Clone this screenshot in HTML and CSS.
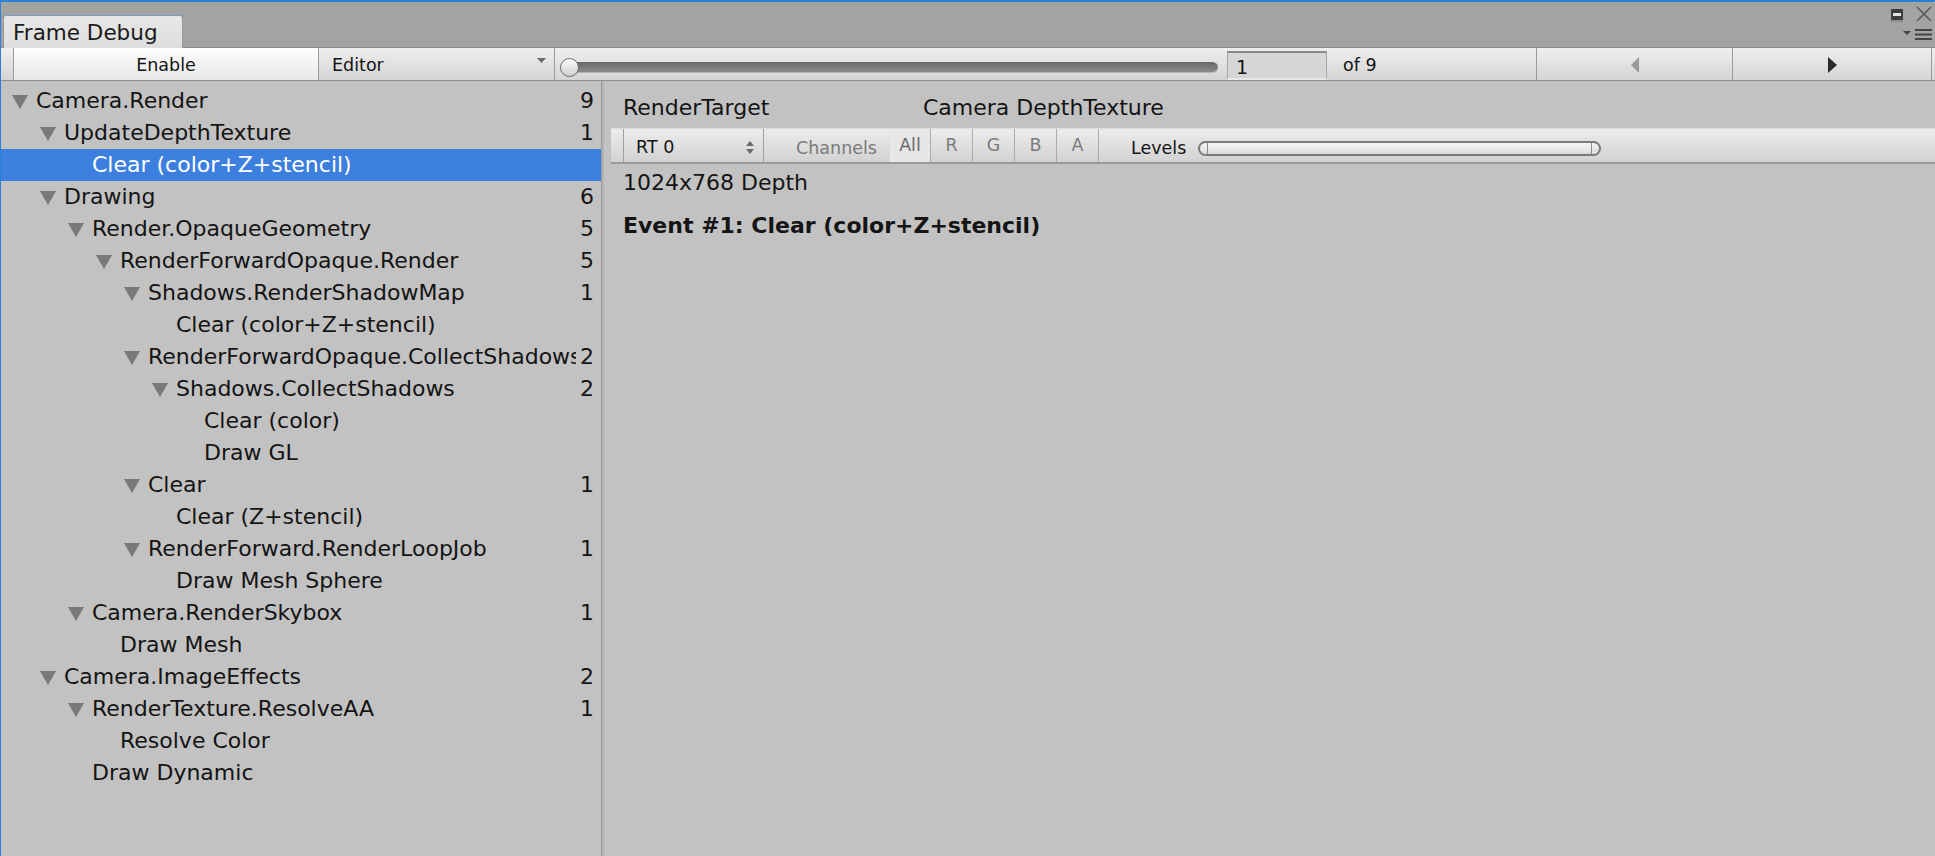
FILE: index.html
```html
<!DOCTYPE html>
<html>
<head>
<meta charset="utf-8">
<title>Frame Debug</title>
<link rel="stylesheet" href="styles.css">
</head>
<body>
<div class="window">
  <div class="titlebar">
    <div class="tab">Frame Debug</div>
    <div class="wincontrols">
      <div class="wc-top">
        <svg class="ic-max" width="12" height="13" viewBox="0 0 12 13"><rect x="0" y="0" width="12" height="12" fill="#3d3d3d"/><rect x="2" y="4" width="8" height="3" fill="#e2e2e2"/><rect x="0" y="11" width="12" height="2" fill="#8c8c8c"/></svg>
        <svg class="ic-close" width="18" height="18" viewBox="0 0 18 18"><path d="M2 2 L16 16 M16 2 L2 16" stroke="#5a5a5a" stroke-width="1.6" fill="none"/></svg>
      </div>
      <svg class="ic-menu" width="30" height="12" viewBox="0 0 30 12"><polygon points="0,2 8,2 4,6" fill="#444"/><path d="M12 1 H29 M12 5.5 H29 M12 10 H29" stroke="#444" stroke-width="2" fill="none"/></svg>
    </div>
  </div>

  <div class="toolbar">
    <div class="tb-lead"></div>
    <div class="tb-enable">Enable</div>
    <div class="tb-editor">
      <span>Editor</span>
      <svg width="9" height="6" viewBox="0 0 9 6"><polygon points="0,0 9,0 4.5,5" fill="#6a6a6a"/></svg>
    </div>
    <div class="tb-slider">
      <div class="thumb"></div>
      <div class="track"></div>
    </div>
    <div class="tb-field">1</div>
    <div class="tb-of">of 9</div>
    <div class="tb-nav">
      <svg width="8" height="16" viewBox="0 0 8 16"><polygon points="8,0 8,16 0,8" fill="#9a9a9a"/></svg>
    </div>
    <div class="tb-nav last">
      <svg width="9" height="16" viewBox="0 0 9 16"><polygon points="0,0 9,8 0,16" fill="#2a2a2a"/></svg>
    </div>
  </div>

  <div class="main">
    <div class="tree">
      <div class="row l0"><span class="twist"><svg width="16" height="14" viewBox="0 0 16 14"><polygon points="0,0 16,0 8,14" fill="#797979"/></svg></span><span class="label">Camera.Render</span><span class="count">9</span></div>
      <div class="row l1"><span class="twist"><svg width="16" height="14" viewBox="0 0 16 14"><polygon points="0,0 16,0 8,14" fill="#797979"/></svg></span><span class="label">UpdateDepthTexture</span><span class="count">1</span></div>
      <div class="row l2 selected"><span class="twist"></span><span class="label">Clear (color+Z+stencil)</span><span class="count"></span></div>
      <div class="row l1"><span class="twist"><svg width="16" height="14" viewBox="0 0 16 14"><polygon points="0,0 16,0 8,14" fill="#797979"/></svg></span><span class="label">Drawing</span><span class="count">6</span></div>
      <div class="row l2"><span class="twist"><svg width="16" height="14" viewBox="0 0 16 14"><polygon points="0,0 16,0 8,14" fill="#797979"/></svg></span><span class="label">Render.OpaqueGeometry</span><span class="count">5</span></div>
      <div class="row l3"><span class="twist"><svg width="16" height="14" viewBox="0 0 16 14"><polygon points="0,0 16,0 8,14" fill="#797979"/></svg></span><span class="label">RenderForwardOpaque.Render</span><span class="count">5</span></div>
      <div class="row l4"><span class="twist"><svg width="16" height="14" viewBox="0 0 16 14"><polygon points="0,0 16,0 8,14" fill="#797979"/></svg></span><span class="label">Shadows.RenderShadowMap</span><span class="count">1</span></div>
      <div class="row l5"><span class="twist"></span><span class="label">Clear (color+Z+stencil)</span><span class="count"></span></div>
      <div class="row l4"><span class="twist"><svg width="16" height="14" viewBox="0 0 16 14"><polygon points="0,0 16,0 8,14" fill="#797979"/></svg></span><span class="label">RenderForwardOpaque.CollectShadows</span><span class="count">2</span></div>
      <div class="row l5"><span class="twist"><svg width="16" height="14" viewBox="0 0 16 14"><polygon points="0,0 16,0 8,14" fill="#797979"/></svg></span><span class="label">Shadows.CollectShadows</span><span class="count">2</span></div>
      <div class="row l6"><span class="twist"></span><span class="label">Clear (color)</span><span class="count"></span></div>
      <div class="row l6"><span class="twist"></span><span class="label">Draw GL</span><span class="count"></span></div>
      <div class="row l4"><span class="twist"><svg width="16" height="14" viewBox="0 0 16 14"><polygon points="0,0 16,0 8,14" fill="#797979"/></svg></span><span class="label">Clear</span><span class="count">1</span></div>
      <div class="row l5"><span class="twist"></span><span class="label">Clear (Z+stencil)</span><span class="count"></span></div>
      <div class="row l4"><span class="twist"><svg width="16" height="14" viewBox="0 0 16 14"><polygon points="0,0 16,0 8,14" fill="#797979"/></svg></span><span class="label">RenderForward.RenderLoopJob</span><span class="count">1</span></div>
      <div class="row l5"><span class="twist"></span><span class="label">Draw Mesh Sphere</span><span class="count"></span></div>
      <div class="row l2"><span class="twist"><svg width="16" height="14" viewBox="0 0 16 14"><polygon points="0,0 16,0 8,14" fill="#797979"/></svg></span><span class="label">Camera.RenderSkybox</span><span class="count">1</span></div>
      <div class="row l3"><span class="twist"></span><span class="label">Draw Mesh</span><span class="count"></span></div>
      <div class="row l1"><span class="twist"><svg width="16" height="14" viewBox="0 0 16 14"><polygon points="0,0 16,0 8,14" fill="#797979"/></svg></span><span class="label">Camera.ImageEffects</span><span class="count">2</span></div>
      <div class="row l2"><span class="twist"><svg width="16" height="14" viewBox="0 0 16 14"><polygon points="0,0 16,0 8,14" fill="#797979"/></svg></span><span class="label">RenderTexture.ResolveAA</span><span class="count">1</span></div>
      <div class="row l3"><span class="twist"></span><span class="label">Resolve Color</span><span class="count"></span></div>
      <div class="row l2"><span class="twist"></span><span class="label">Draw Dynamic</span><span class="count"></span></div>
    </div>

    <div class="detail">
      <div class="info-head">
        <span class="head-label">RenderTarget</span>
        <span>Camera DepthTexture</span>
      </div>
      <div class="dtoolbar">
        <div class="dt-lead"></div>
        <div class="dt-rt">
          <span>RT 0</span>
          <svg width="8" height="13" viewBox="0 0 8 13"><polygon points="4,0 8,5 0,5" fill="#6a6a6a"/><polygon points="0,8 8,8 4,13" fill="#6a6a6a"/></svg>
        </div>
        <div class="dt-channels">Channels</div>
        <div class="dt-ch active">All</div>
        <div class="dt-ch">R</div>
        <div class="dt-ch">G</div>
        <div class="dt-ch">B</div>
        <div class="dt-ch">A</div>
        <div class="dt-levels">Levels</div>
        <div class="levels-track"><span class="cap-l"></span><span class="cap-r"></span></div>
      </div>
      <div class="info-row">1024x768 Depth</div>
      <div class="info-row event">Event #1: Clear (color+Z+stencil)</div>
    </div>
  </div>
</div>
</body>
</html>
```

FILE: styles.css
```css
* {
  box-sizing: border-box;
  margin: 0;
  padding: 0;
}

html, body {
  width: 1935px;
  height: 856px;
  overflow: hidden;
}

body {
  font-family: "DejaVu Sans", Verdana, sans-serif;
  background: #c2c2c2;
  color: #141414;
}

.window {
  width: 1935px;
  height: 856px;
  display: flex;
  flex-direction: column;
  border-top: 2px solid #2a82d7;
  border-left: 1px solid #2a82d7;
  background: #c2c2c2;
}

/* ---------- title bar ---------- */
.titlebar {
  height: 45px;
  flex: 0 0 45px;
  background: #a3a3a3;
  display: flex;
  align-items: flex-end;
}

.tab {
  position: relative;
  z-index: 1;
  margin-left: 2px;
  margin-bottom: -1px;
  width: 180px;
  height: 33px;
  background: linear-gradient(#e7e7e7, #dedede);
  border: 1px solid #999;
  border-top-color: #7f9cc2;
  border-bottom: none;
  border-radius: 3px 3px 0 0;
  font-size: 21.5px;
  line-height: 31px;
  padding-top: 1px;
  padding-left: 9px;
  color: #1a1a1a;
  white-space: nowrap;
}

.wincontrols {
  margin-left: auto;
  align-self: flex-start;
  display: flex;
  flex-direction: column;
  align-items: flex-end;
  padding-right: 2px;
  padding-top: 3px;
}

.wc-top {
  display: flex;
  align-items: center;
  gap: 12px;
}

.ic-max {
  margin-top: 3px;
}

.ic-menu {
  margin-top: 6px;
}

/* ---------- main toolbar ---------- */
.toolbar {
  height: 34px;
  flex: 0 0 34px;
  display: flex;
  background: linear-gradient(#efefef, #d4d4d4);
  border-top: 1px solid #8a8a8a;
  border-bottom: 1px solid #8e8e8e;
  font-size: 17.5px;
  color: #141414;
}

.tb-lead {
  flex: 0 0 13px;
  border-right: 1px solid #9a9a9a;
}

.tb-enable {
  flex: 0 0 305px;
  background: linear-gradient(#fdfdfd, #e8e8e8);
  border-right: 1px solid #9a9a9a;
  text-align: center;
  padding-top: 2px;
  line-height: 30px;
}

.tb-editor {
  flex: 0 0 236px;
  display: flex;
  align-items: center;
  justify-content: space-between;
  padding: 2px 8px 0 13px;
  border-right: 1px solid #9a9a9a;
}

.tb-editor svg {
  margin-top: -8px;
}

.tb-slider {
  flex: 0 0 672px;
  display: flex;
  align-items: center;
  padding: 6px 9px 0 5px;
}

.thumb {
  position: relative;
  z-index: 1;
  width: 19px;
  height: 19px;
  border-radius: 50%;
  border: 1px solid #6c6c6c;
  background: linear-gradient(#fbfbfb, #cfcfcf);
  flex: 0 0 19px;
}

.track {
  flex: 1;
  height: 11px;
  margin-left: -9px;
  border-radius: 0 6px 6px 0;
  background: linear-gradient(#676767, #8c8c8c);
  border-bottom: 1px solid #b5b5b5;
}

.tb-field {
  flex: 0 0 100px;
  margin-top: 3px;
  background: #d6d6d6;
  border: 1px solid #a6a6a6;
  border-top: 2px solid #8a8a8a;
  border-bottom: 2px solid #e8e8e8;
  font-size: 19px;
  line-height: 25px;
  padding-top: 2px;
  padding-left: 8px;
}

.tb-of {
  flex: 0 0 210px;
  padding-left: 16px;
  padding-top: 2px;
  line-height: 30px;
  border-right: 1px solid #9a9a9a;
}

.tb-nav {
  flex: 0 0 196px;
  display: flex;
  align-items: center;
  justify-content: center;
  padding-top: 2px;
  border-right: 1px solid #9a9a9a;
}

.tb-nav.last {
  flex: 0 0 199px;
}

/* ---------- main area ---------- */
.main {
  flex: 1;
  display: flex;
  min-height: 0;
}

.tree {
  flex: 0 0 601px;
  width: 601px;
  min-width: 0;
  overflow: hidden;
  padding-top: 4px;
  border-right: 1px solid #9b9b9b;
  font-size: 22px;
}

.row {
  height: 32px;
  display: flex;
  align-items: center;
  white-space: nowrap;
}

.row.selected {
  background: #3d7fde;
  color: #ffffff;
}

.twist {
  flex: 0 0 24px;
  height: 32px;
  display: flex;
  align-items: center;
}

.twist svg {
  margin-top: 2px;
}

.label {
  flex: 1;
  min-width: 0;
  overflow: hidden;
  line-height: 32px;
}

.count {
  flex: 0 0 25px;
  text-align: right;
  padding-right: 7px;
  line-height: 32px;
}

.l0 { padding-left: 11px; }
.l1 { padding-left: 39px; }
.l2 { padding-left: 67px; }
.l3 { padding-left: 95px; }
.l4 { padding-left: 123px; }
.l5 { padding-left: 151px; }
.l6 { padding-left: 179px; }

/* ---------- detail panel ---------- */
.detail {
  flex: 1;
  min-width: 0;
  border-left: 2px solid #b3b3b3;
  padding-top: 11px;
  font-size: 22px;
}

.info-head {
  height: 32px;
  line-height: 32px;
  padding-left: 19px;
  display: flex;
  white-space: nowrap;
}

.head-label {
  flex: 0 0 300px;
}

.dtoolbar {
  margin-top: 4px;
  margin-left: 7px;
  height: 36px;
  display: flex;
  background: linear-gradient(#ececec, #d2d2d2);
  border-top: 1px solid #dcdcdc;
  border-bottom: 2px solid #9a9a9a;
  font-size: 17.5px;
}

.dt-lead {
  flex: 0 0 13px;
  border-right: 1px solid #a0a0a0;
}

.dt-rt {
  flex: 0 0 140px;
  display: flex;
  align-items: center;
  justify-content: space-between;
  padding: 3px 9px 0 12px;
  border-right: 1px solid #a0a0a0;
}

.dt-channels {
  flex: 0 0 126px;
  padding-left: 32px;
  padding-top: 3px;
  line-height: 32px;
  color: #7a7a7a;
  white-space: nowrap;
}

.dt-ch {
  flex: 0 0 42px;
  text-align: center;
  padding-top: 1px;
  line-height: 31px;
  color: #7a7a7a;
  border-right: 1px solid #ababab;
}

.dt-ch.active {
  flex: 0 0 41px;
  background: #e7e7e7;
  color: #6a6a6a;
}

.dt-levels {
  flex: 0 0 99px;
  padding-left: 32px;
  padding-top: 3px;
  line-height: 32px;
  color: #141414;
}

.levels-track {
  flex: 0 0 403px;
  height: 15px;
  margin-top: 12px;
  display: flex;
  justify-content: space-between;
  border: 2px solid #7b7b7b;
  border-radius: 8px;
  background: linear-gradient(#f5f5f5, #dcdcdc);
}

.cap-l {
  width: 8px;
  border-right: 1px solid #8a8a8a;
}

.cap-r {
  width: 8px;
  border-left: 1px solid #8a8a8a;
}

.info-row {
  margin-top: 3px;
  height: 32px;
  line-height: 32px;
  padding-left: 19px;
  white-space: nowrap;
}

.info-row.event {
  margin-top: 11px;
  font-weight: bold;
}
```
